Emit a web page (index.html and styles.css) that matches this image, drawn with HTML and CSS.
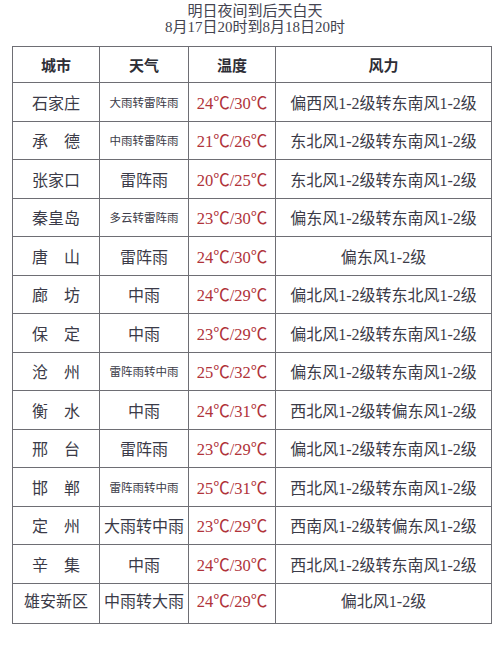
FILE: index.html
```html
<!DOCTYPE html>
<html lang="zh">
<head>
<meta charset="utf-8">
<link rel="stylesheet" href="styles.css">
</head>
<body>
<div class="title">
  <div class="t1">明日夜间到后天白天</div>
  <div class="t2">8月17日20时到8月18日20时</div>
</div>
<table class="wx">
  <colgroup>
    <col class="c1"><col class="c2"><col class="c3"><col class="c4">
  </colgroup>
  <thead>
    <tr class="head"><th>城市</th><th>天气</th><th>温度</th><th>风力</th></tr>
  </thead>
  <tbody>
    <tr><td>石家庄</td><td class="sm">大雨转雷阵雨</td><td class="tp">24℃/30℃</td><td>偏西风1-2级转东南风1-2级</td></tr>
    <tr><td>承　德</td><td class="sm">中雨转雷阵雨</td><td class="tp">21℃/26℃</td><td>东北风1-2级转东南风1-2级</td></tr>
    <tr><td>张家口</td><td>雷阵雨</td><td class="tp">20℃/25℃</td><td>东北风1-2级转东南风1-2级</td></tr>
    <tr><td>秦皇岛</td><td class="sm">多云转雷阵雨</td><td class="tp">23℃/30℃</td><td>偏东风1-2级转东南风1-2级</td></tr>
    <tr><td>唐　山</td><td>雷阵雨</td><td class="tp">24℃/30℃</td><td>偏东风1-2级</td></tr>
    <tr><td>廊　坊</td><td>中雨</td><td class="tp">24℃/29℃</td><td>偏北风1-2级转东北风1-2级</td></tr>
    <tr><td>保　定</td><td>中雨</td><td class="tp">23℃/29℃</td><td>偏北风1-2级转东南风1-2级</td></tr>
    <tr><td>沧　州</td><td class="sm">雷阵雨转中雨</td><td class="tp">25℃/32℃</td><td>偏东风1-2级转东南风1-2级</td></tr>
    <tr><td>衡　水</td><td>中雨</td><td class="tp">24℃/31℃</td><td>西北风1-2级转偏东风1-2级</td></tr>
    <tr><td>邢　台</td><td>雷阵雨</td><td class="tp">23℃/29℃</td><td>偏北风1-2级转东南风1-2级</td></tr>
    <tr><td>邯　郸</td><td class="sm">雷阵雨转中雨</td><td class="tp">25℃/31℃</td><td>西北风1-2级转东南风1-2级</td></tr>
    <tr><td>定　州</td><td>大雨转中雨</td><td class="tp">23℃/29℃</td><td>西南风1-2级转偏东风1-2级</td></tr>
    <tr><td>辛　集</td><td>中雨</td><td class="tp">24℃/30℃</td><td>西北风1-2级转东南风1-2级</td></tr>
    <tr class="last"><td>雄安新区</td><td>中雨转大雨</td><td class="tp">24℃/29℃</td><td>偏北风1-2级</td></tr>
  </tbody>
</table>
</body>
</html>
```

FILE: styles.css
```css
html, body {
  margin: 0;
  padding: 0;
  background: #ffffff;
}
body {
  width: 500px;
  height: 646px;
  font-family: "Liberation Serif", "Noto Sans CJK SC", serif;
  color: #3b3b48;
}
.title {
  text-align: center;
  padding: 4px 0 0 10px;
  font-size: 15px;
  line-height: 15.5px;
  color: #444450;
  height: 46px;
  box-sizing: border-box;
}
.wx {
  margin-left: 12px;
  width: 479px;
  border-collapse: collapse;
  table-layout: fixed;
  font-size: 16px;
}
.c1 { width: 87px; }
.c2 { width: 89px; }
.c3 { width: 87px; }
.c4 { width: 216px; }
.wx th, .wx td {
  border: 1px solid #6e6e74;
  text-align: center;
  vertical-align: middle;
  padding: 0;
  white-space: nowrap;
}
.head th {
  height: 35px;
  font-weight: bold;
  font-size: 15px;
  color: #2e2e36;
}
.wx td {
  height: 37.5px;
}
.wx td.sm {
  font-size: 11.5px;
}
.wx td.tp {
  color: #b0333a;
  font-size: 16.5px;
}
.last td {
  height: 33px;
  padding-bottom: 6px;
}
```
